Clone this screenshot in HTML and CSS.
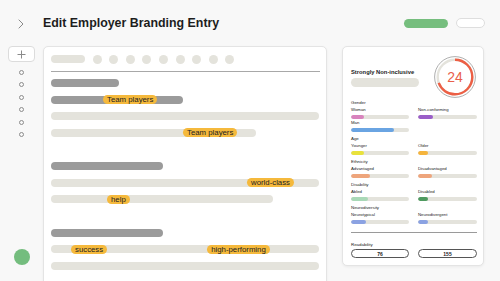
FILE: index.html
```html
<!DOCTYPE html>
<html lang="en">
<head>
<meta charset="utf-8">
<title>Edit Employer Branding Entry</title>
<link rel="stylesheet" href="styles.css">
</head>
<body>
<div class="app">
  <header class="topbar">
    <svg class="chevron" width="6" height="10" viewBox="0 0 6 10"><polyline points="0.7,0.7 5,5 0.7,9.3" fill="none" stroke="#8a8a8a" stroke-width="1"/></svg>
    <h1 class="title">Edit Employer Branding Entry</h1>
    <div class="actions">
      <span class="btn btn-primary"></span>
      <span class="btn btn-ghost"></span>
    </div>
  </header>
  <div class="content">
    <aside class="rail">
      <div class="add-btn">
        <svg width="9" height="9" viewBox="0 0 9 9"><path d="M4.5 0.5v8M0.5 4.5h8" stroke="#8a8a8a" stroke-width="1"/></svg>
      </div>
      <ul class="steps">
        <li></li><li></li><li></li><li></li><li></li><li></li>
      </ul>
      <span class="status-dot"></span>
    </aside>

    <main class="editor">
      <div class="toolbar">
        <span class="tool-pill"></span>
        <span class="tool-dot"></span><span class="tool-dot"></span><span class="tool-dot"></span>
        <span class="tool-dot"></span><span class="tool-dot"></span><span class="tool-dot"></span>
        <span class="tool-dot"></span><span class="tool-dot"></span><span class="tool-dot"></span>
      </div>
      <div class="divider"></div>
      <div class="groups">
        <div class="group">
          <div class="line dark" style="width:68px"></div>
          <div class="line dark" style="width:132px"><span class="hl" style="margin-left:52px">Team players</span></div>
          <div class="line" style="width:268px"></div>
          <div class="line" style="width:205px"><span class="hl" style="margin-left:132px">Team players</span></div>
        </div>
        <div class="group">
          <div class="line dark" style="width:112px"></div>
          <div class="line" style="width:268px"><span class="hl" style="margin-left:196px">world-class</span></div>
          <div class="line" style="width:222px"><span class="hl" style="margin-left:56px">help</span></div>
        </div>
        <div class="group">
          <div class="line dark" style="width:112px"></div>
          <div class="line" style="width:268px"><span class="hl" style="margin-left:20px">success</span><span class="hl" style="margin-left:100px">high-performing</span></div>
          <div class="line" style="width:268px"></div>
        </div>
      </div>
    </main>

    <section class="score">
      <div class="score-head">
        <div class="score-text">
          <h2 class="verdict">Strongly Non-inclusive</h2>
          <span class="verdict-pill"></span>
        </div>
        <div class="gauge">
          <svg width="42" height="42" viewBox="0 0 42 42">
            <circle cx="21" cy="21" r="20.4" fill="none" stroke="#9a9a9a" stroke-width="0.8"/>
            <circle cx="21" cy="21" r="17.3" fill="none" stroke="#e4e3dc" stroke-width="2.4"/>
            <circle class="gauge-arc" cx="21" cy="21" r="17.3" fill="none" stroke="#ec5f45" stroke-width="2.4" stroke-dasharray="75 200" transform="rotate(-90 21 21)"/>
          </svg>
          <span class="gauge-num">24</span>
        </div>
      </div>

      <div class="metrics">
        <h3 class="m-head">Gender</h3>
        <div class="m-item"><span class="m-label">Woman</span><div class="track"><span class="fill" style="width:13px;background:#d883bd"></span></div></div>
        <div class="m-item"><span class="m-label">Non-conforming</span><div class="track"><span class="fill" style="width:15px;background:#9a5ec8"></span></div></div>
        <div class="m-item"><span class="m-label">Man</span><div class="track"><span class="fill" style="width:43px;background:#6aa4e2"></span></div></div>
        <div class="m-item"></div>

        <h3 class="m-head">Age</h3>
        <div class="m-item"><span class="m-label">Younger</span><div class="track"><span class="fill" style="width:13px;background:#e9e23c"></span></div></div>
        <div class="m-item"><span class="m-label">Older</span><div class="track"><span class="fill" style="width:10px;background:#f5b43c"></span></div></div>

        <h3 class="m-head">Ethnicity</h3>
        <div class="m-item"><span class="m-label">Advantaged</span><div class="track"><span class="fill" style="width:19px;background:#eea57c"></span></div></div>
        <div class="m-item"><span class="m-label">Disadvantaged</span><div class="track"><span class="fill" style="width:14px;background:#eea57c"></span></div></div>

        <h3 class="m-head">Disability</h3>
        <div class="m-item"><span class="m-label">Abled</span><div class="track"><span class="fill" style="width:17px;background:#a9d9b7"></span></div></div>
        <div class="m-item"><span class="m-label">Disabled</span><div class="track"><span class="fill" style="width:10px;background:#4f9a60"></span></div></div>

        <h3 class="m-head">Neurodiversity</h3>
        <div class="m-item"><span class="m-label">Neurotypical</span><div class="track"><span class="fill" style="width:15px;background:#8ba2e2"></span></div></div>
        <div class="m-item"><span class="m-label">Neurodivergent</span><div class="track"><span class="fill" style="width:10px;background:#8ba2e2"></span></div></div>
      </div>

      <div class="score-divider"></div>
      <h3 class="m-head read-head">Readability</h3>
      <div class="readability">
        <span class="read-box">76</span>
        <span class="read-box">155</span>
      </div>
    </section>
  </div>
</div>
</body>
</html>
```

FILE: styles.css
```css
* { box-sizing: border-box; margin: 0; padding: 0; }
html, body { width: 500px; height: 281px; overflow: hidden; }
body {
  background: #f8f8f8;
  font-family: "Liberation Sans", Arial, sans-serif;
  color: #1d1d1d;
}
.app { display: flex; flex-direction: column; height: 281px; }

.topbar {
  height: 46px;
  display: flex;
  align-items: center;
  padding: 0 15px 0 18px;
}
.chevron { display: block; margin-right: 19px; margin-top: 1px; }
.title { font-size: 12.4px; font-weight: 700; letter-spacing: 0; }
.actions { margin-left: auto; display: flex; align-items: center; gap: 8px; }
.btn { display: block; border-radius: 6px; }
.btn-primary { width: 44px; height: 9px; background: #76be7e; }
.btn-ghost { width: 29px; height: 10px; background: #fff; border: 1px solid #dedede; }

.content { display: flex; flex: 1; min-height: 0; }

.rail {
  width: 43px;
  display: flex;
  flex-direction: column;
  align-items: center;
  padding: 0 0 16px 0;
}
.add-btn {
  width: 27px; height: 16px;
  background: #fff;
  border: 1px solid #dcdcdc;
  border-radius: 4px;
  display: flex; align-items: center; justify-content: center;
  margin-left: -1px;
}
.steps { list-style: none; display: flex; flex-direction: column; gap: 7.5px; margin-top: 7.5px; }
.steps li { width: 5px; height: 5px; border: 1px solid #8c8c8c; border-radius: 50%; }
.status-dot { margin-top: auto; width: 16px; height: 16px; border-radius: 50%; background: #74bd7e; }

.editor {
  width: 284px;
  height: 250px;
  background: #fff;
  border: 1px solid #e4e4e4;
  border-radius: 5px;
  box-shadow: 0 1px 3px rgba(0,0,0,0.05);
  padding: 7.5px 7px 0 7px;
}
.toolbar { display: flex; align-items: center; gap: 7.6px; height: 9px; }
.tool-pill { width: 34px; height: 8px; border-radius: 4px; background: #e4e3dc; }
.tool-dot { width: 9px; height: 9px; border-radius: 50%; background: #e4e3dc; }
.divider { height: 1px; background: #a8a8a8; margin: 7.5px 0 7px; width: 269px; }
.groups { display: flex; flex-direction: column; gap: 25.5px; }
.group { display: flex; flex-direction: column; gap: 8.5px; }
.line {
  height: 8px;
  border-radius: 4px;
  background: #e4e3dc;
  display: flex;
  align-items: center;
}
.line.dark { background: #9b9b9b; }
.hl {
  height: 9px;
  line-height: 9px;
  padding: 0 4px;
  border-radius: 4.5px;
  background: #f5b93c;
  color: #222;
  font-size: 7.8px;
  white-space: nowrap;
}

.score {
  width: 142px;
  height: 220px;
  margin-left: 15px;
  background: #fff;
  border: 1px solid #e4e4e4;
  border-radius: 5px;
  box-shadow: 0 1px 3px rgba(0,0,0,0.06);
  padding: 9px 7px 0 8px;
}
.score-head { display: flex; align-items: center; justify-content: space-between; height: 42px; margin-right: 0; }
.score-text { display: flex; flex-direction: column; gap: 2px; }
.verdict { font-size: 5.8px; font-weight: 700; line-height: 8px; }
.verdict-pill { width: 68px; height: 9px; border-radius: 4.5px; background: #e4e3dc; }
.gauge { position: relative; width: 42px; height: 42px; }
.gauge svg { display: block; }
.gauge-num {
  position: absolute; inset: 0;
  display: flex; align-items: center; justify-content: center;
  color: #e9604a;
  font-family: "Liberation Sans", Arial, sans-serif;
  font-size: 14px;
  font-weight: 400;
}

.metrics {
  display: grid;
  grid-template-columns: 58px 59px;
  column-gap: 9px;
  margin-top: 0.5px;
}
.m-head { grid-column: 1 / -1; font-size: 4.4px; font-weight: 400; line-height: 7px; color: #222; }
.metrics .m-head + .m-item, .metrics .m-head + .m-item + .m-item { }
.m-item { display: flex; flex-direction: column; margin-bottom: 0; }
.m-label { font-size: 4.3px; line-height: 7px; color: #222; }
.track { margin-top: 2px; height: 4px; border-radius: 2px; background: #e4e3dc; display: flex; overflow: hidden; }
.fill { display: block; height: 4px; border-radius: 2px; }
.metrics .m-head:not(:first-child) { margin-top: 3px; }
.m-item:empty { display: none; }

.score-divider { height: 1px; background: #9a9a9a; margin: 8.5px 0 0; width: 126px; }
.read-head { margin-top: 7.5px; }
.readability { display: grid; grid-template-columns: 58px 59px; column-gap: 9px; margin-top: 1.5px; }
.read-box {
  height: 9px;
  border: 1px solid #555;
  border-radius: 4.5px;
  display: flex; align-items: center; justify-content: center;
  font-size: 5px;
  font-weight: 700;
}
```
